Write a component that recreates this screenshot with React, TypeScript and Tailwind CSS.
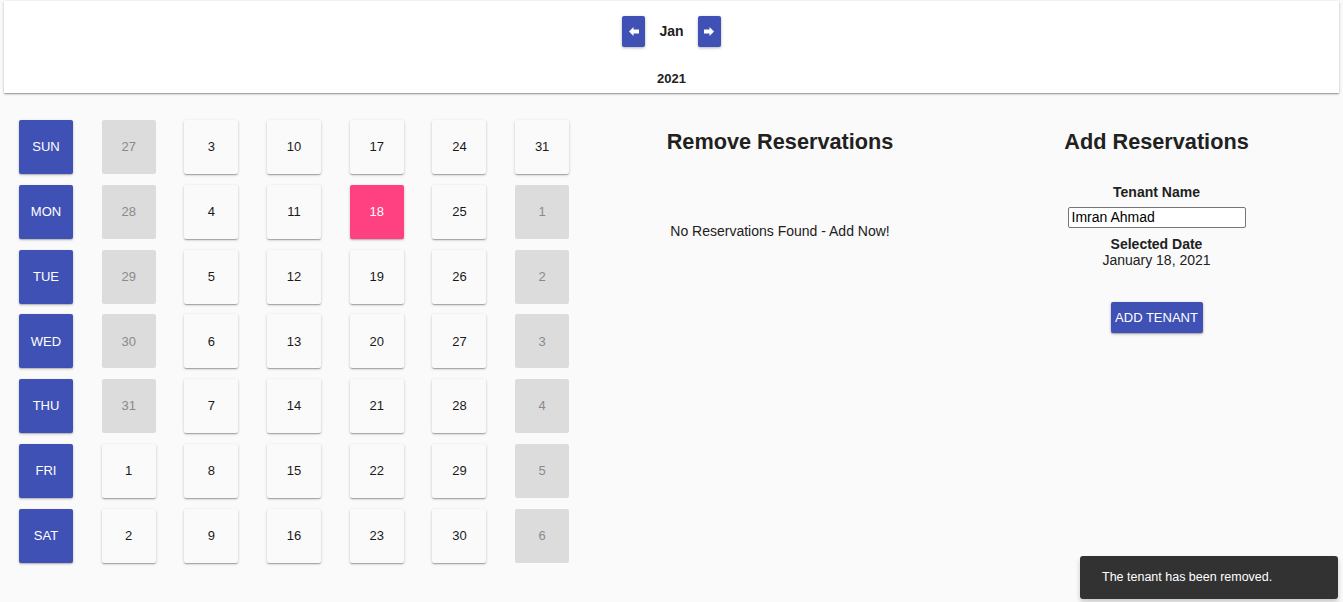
const days = ['SUN', 'MON', 'TUE', 'WED', 'THU', 'FRI', 'SAT']

type Cell = { label: number; muted?: boolean; selected?: boolean }

// columns of the month view, one per week (Sun..Sat)
const weeks: Cell[][] = [
  [27, 28, 29, 30, 31].map((n) => ({ label: n, muted: true })).concat([{ label: 1 }, { label: 2 }]),
  [3, 4, 5, 6, 7, 8, 9].map((n) => ({ label: n })),
  [10, 11, 12, 13, 14, 15, 16].map((n) => ({ label: n })),
  [17, 18, 19, 20, 21, 22, 23].map((n) => ({ label: n, selected: n === 18 })),
  [24, 25, 26, 27, 28, 29, 30].map((n) => ({ label: n })),
  [{ label: 31 }, ...[1, 2, 3, 4, 5, 6].map((n) => ({ label: n, muted: true }))],
]

function Arrow({ dir }: { dir: 'left' | 'right' }) {
  return (
    <svg width="10" height="9" viewBox="0 0 10 9" className={dir === 'right' ? 'rotate-180' : ''}>
      <path d="M0 4.5 L4.5 0 V2.5 H10 V6.5 H4.5 V9 Z" fill="white" />
    </svg>
  )
}

function DayCell({ cell }: { cell: Cell }) {
  if (cell.muted) {
    return (
      <div className="flex h-[54px] w-[54px] items-center justify-center rounded-[2px] bg-[#dcdcdc] text-[13px] text-[#8a8a8a]">
        {cell.label}
      </div>
    )
  }
  if (cell.selected) {
    return (
      <div className="flex h-[54px] w-[54px] items-center justify-center rounded-[2px] bg-[#ff4081] text-[13px] text-white shadow-[0_1px_3px_rgba(0,0,0,0.2),0_1px_1px_rgba(0,0,0,0.14)]">
        {cell.label}
      </div>
    )
  }
  return (
    <div className="flex h-[54px] w-[54px] items-center justify-center rounded-[2px] bg-[#fafafa] text-[13px] text-[#1a1a1a] shadow-[0_1px_3px_rgba(0,0,0,0.2),0_1px_1px_rgba(0,0,0,0.14),0_2px_1px_-1px_rgba(0,0,0,0.12)]">
      {cell.label}
    </div>
  )
}

export default function App() {
  return (
    <div className="relative min-h-screen bg-[#fafafa] pt-px font-['Liberation_Sans',Arial,sans-serif] text-[#212121]">
      <header className="mx-1 flex h-[92px] flex-col items-center bg-white pt-[15px] shadow-[0_1px_3px_rgba(0,0,0,0.2),0_1px_1px_rgba(0,0,0,0.14),0_2px_1px_-1px_rgba(0,0,0,0.12)]">
        <div className="flex items-center gap-[14px]">
          <button className="flex h-[31px] w-[23px] items-center justify-center rounded-[2px] bg-[#3f51b5] shadow-[0_1px_3px_rgba(0,0,0,0.3)]">
            <Arrow dir="left" />
          </button>
          <span className="text-[14px] font-bold">Jan</span>
          <button className="flex h-[31px] w-[23px] items-center justify-center rounded-[2px] bg-[#3f51b5] shadow-[0_1px_3px_rgba(0,0,0,0.3)]">
            <Arrow dir="right" />
          </button>
        </div>
        <div className="mt-[22px] text-[13px] font-bold">2021</div>
      </header>

      <main className="flex">
        <section className="w-[590px] pl-[19px] pt-[27px]">
          <div className="grid grid-flow-col grid-cols-[repeat(7,54px)] grid-rows-[repeat(7,54px)] gap-x-[28.7px] gap-y-[10.8px]">
            {days.map((d) => (
              <div
                key={d}
                className="flex h-[54px] w-[54px] items-center justify-center rounded-[2px] bg-[#3f51b5] text-[13px] text-white shadow-[0_1px_3px_rgba(0,0,0,0.2),0_1px_1px_rgba(0,0,0,0.14)]"
              >
                {d}
              </div>
            ))}
            {weeks.flat().map((cell, i) => (
              <DayCell key={i} cell={cell} />
            ))}
          </div>
        </section>

        <section className="flex w-[380px] flex-col items-center pt-[36px]">
          <h2 className="text-[21.7px] font-bold leading-[26px]">Remove Reservations</h2>
          <p className="mt-[66px] text-[14px]">No Reservations Found - Add Now!</p>
        </section>

        <section className="flex flex-1 flex-col items-center pt-[36px]">
          <h2 className="text-[21.7px] font-bold leading-[26px]">Add Reservations</h2>
          <label className="mt-[29px] text-[14px] font-bold leading-[16px]">Tenant Name</label>
          <input
            defaultValue="Imran Ahmad"
            className="mt-[7px] h-[21px] w-[178px] rounded-[2px] border border-[#767676] bg-white px-[3px] text-[14px] text-black outline-none"
          />
          <div className="mt-[8px] text-[14px] font-bold leading-[16px]">Selected Date</div>
          <div className="text-[14px] leading-[16px]">January 18, 2021</div>
          <button className="mt-[34px] h-[31px] w-[92px] rounded-[2px] bg-[#3f51b5] text-[13px] text-white shadow-[0_1px_3px_rgba(0,0,0,0.3),0_1px_1px_rgba(0,0,0,0.14)]">
            ADD TENANT
          </button>
        </section>
      </main>

      <div className="absolute bottom-[3px] right-[5px] flex h-[43px] w-[258px] items-center rounded-[3px] bg-[#323232] pl-[22px] text-[12.5px] text-white shadow-[0_3px_5px_rgba(0,0,0,0.2)]">
        The tenant has been removed.
      </div>
    </div>
  )
}
